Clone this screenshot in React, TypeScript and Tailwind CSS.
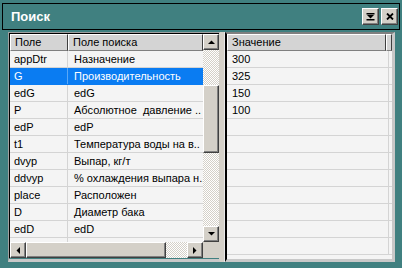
import React from "react";

const leftRows: [string, string][] = [
  ["appDtr", "Назначение"],
  ["G", "Производительность"],
  ["edG", "edG"],
  ["P", "Абсолютное  давление .."],
  ["edP", "edP"],
  ["t1", "Температура воды на в.."],
  ["dvyp", "Выпар, кг/т"],
  ["ddvyp", "% охлаждения выпара н.."],
  ["place", "Расположен"],
  ["D", "Диаметр бака"],
  ["edD", "edD"],
  ["", ""],
];

const values = ["300", "325", "150", "100", "", "", "", "", "", "", "", ""];

const btn =
  "flex items-center justify-center bg-[#d4d0c8] border border-t-white border-l-white border-r-[#404040] border-b-[#404040] shadow-[inset_-1px_-1px_#808080]";
const checker =
  "bg-[conic-gradient(#ffffff_25%,#d4d0c8_0_50%,#ffffff_0_75%,#d4d0c8_0)] bg-[length:2px_2px]";

function Arrow({ dir }: { dir: "up" | "down" | "left" | "right" }) {
  const pts = {
    up: "0,4 7,4 3.5,0.5",
    down: "0,0 7,0 3.5,3.5",
    left: "4,0 4,7 0.5,3.5",
    right: "0,0 0,7 3.5,3.5",
  }[dir];
  const vertical = dir === "up" || dir === "down";
  return (
    <svg width={vertical ? 7 : 4} height={vertical ? 4 : 7} viewBox={vertical ? "0 0 7 4" : "0 0 4 7"}>
      <polygon points={pts} fill="#000" />
    </svg>
  );
}

function HeaderCell({ label, className }: { label: string; className?: string }) {
  return (
    <div
      className={
        "h-[17px] flex items-center pl-[4px] bg-[#d4d4d4] border-t border-l border-t-white border-l-white border-r border-b border-r-[#404040] border-b-[#808080] text-[#000] " +
        (className ?? "")
      }
    >
      {label}
    </div>
  );
}

export default function App() {
  return (
    <div className="w-[402px] h-[268px] bg-[#408080] overflow-hidden text-[11px] leading-none font-['Liberation_Sans',Arial,sans-serif]">
      {/* title bar */}
      <div className="mt-[3px] mx-[2px] h-[27px] border border-black flex items-center justify-between pl-[8px] pr-[1px]">
        <span className="text-white font-bold text-[13px]">Поиск</span>
        <div className="flex gap-[2px]">
          <div className={btn + " w-[17px] h-[17px]"}>
            <svg width="9" height="8" viewBox="0 0 9 8">
              <rect x="0.5" y="0" width="8" height="1.5" fill="#000" />
              <polygon points="1,2 8,2 4.5,5.5" fill="#000" />
              <rect x="0.5" y="6" width="8" height="1.5" fill="#000" />
            </svg>
          </div>
          <div className={btn + " w-[17px] h-[17px]"}>
            <svg width="8" height="7" viewBox="0 0 8 7">
              <path d="M1 0.5 L7 6.5 M7 0.5 L1 6.5" stroke="#000" strokeWidth="1.8" />
            </svg>
          </div>
        </div>
      </div>

      <div className="flex ml-[8px] mt-[2px]">
        {/* left grid */}
        <div className="w-[212px] border-l border-t border-l-[#a0a0a0] border-t-[#a0a0a0] border-r border-r-[#d4d0c8] border-b-[3px] border-b-[#c8c8c8]">
          <div className="border-l border-t border-black flex flex-col">
            <div className="flex">
              <div className="w-[193px] h-[208px] overflow-hidden bg-[#f4f4f4]">
                <div className="flex">
                  <HeaderCell label="Поле" className="w-[58px]" />
                  <HeaderCell label="Поле поиска" className="w-[135px]" />
                </div>
                {leftRows.map(([a, b], i) => {
                  const sel = i === 1;
                  return (
                    <div
                      key={i}
                      className={
                        "flex h-[17px] border-b " +
                        (sel ? "bg-[#0a7cf2] text-white border-b-[#0a7cf2]" : "text-black border-b-[#d4d4d4]")
                      }
                    >
                      <div className={"w-[58px] pl-[4px] flex items-center border-r " + (sel ? "border-r-[#5aa8f7]" : "border-r-[#d4d4d4]")}>
                        {a}
                      </div>
                      <div className="w-[135px] pl-[6px] flex items-center whitespace-pre overflow-hidden">{b}</div>
                    </div>
                  );
                })}
              </div>
              {/* vertical scrollbar */}
              <div className="w-[16px] h-[208px] flex flex-col">
                <div className={btn + " h-[16px]"}>
                  <Arrow dir="up" />
                </div>
                <div className={checker + " h-[35px]"} />
                <div className={btn + " h-[68px]"} />
                <div className={checker + " flex-1"} />
                <div className={btn + " h-[16px]"}>
                  <Arrow dir="down" />
                </div>
              </div>
            </div>
            <div className="flex h-[16px]">
              <div className="w-[193px] flex">
                <div className={btn + " w-[16px]"}>
                  <Arrow dir="left" />
                </div>
                <div className={btn + " w-[140px]"} />
                <div className={checker + " flex-1"} />
                <div className={btn + " w-[16px]"}>
                  <Arrow dir="right" />
                </div>
              </div>
              <div className="w-[16px] bg-[#d4d0c8]" />
            </div>
          </div>
        </div>

        {/* splitter */}
        <div className="w-[5px] bg-[#d4d0c8] border-r border-r-[#e8e8e8]" />

        {/* right grid */}
        <div className="w-[170px] border-l-2 border-l-black border-t-2 border-t-[#808080] border-r-[3px] border-r-[#c8c8c8] border-b-[3px] border-b-[#c8c8c8]">
          <div className="h-[225px] overflow-hidden bg-[#f4f4f4]">
            <div className="flex">
              <HeaderCell label="Значение" className="w-[162px]" />
              <HeaderCell label="" className="flex-1" />
            </div>
            {values.map((v, i) => (
              <div key={i} className="flex h-[17px] border-b border-b-[#d4d4d4] text-black">
                <div className="w-[162px] pl-[5px] flex items-center border-r border-r-[#d4d4d4]">{v}</div>
                <div className="flex-1" />
              </div>
            ))}
          </div>
        </div>
      </div>
    </div>
  );
}
